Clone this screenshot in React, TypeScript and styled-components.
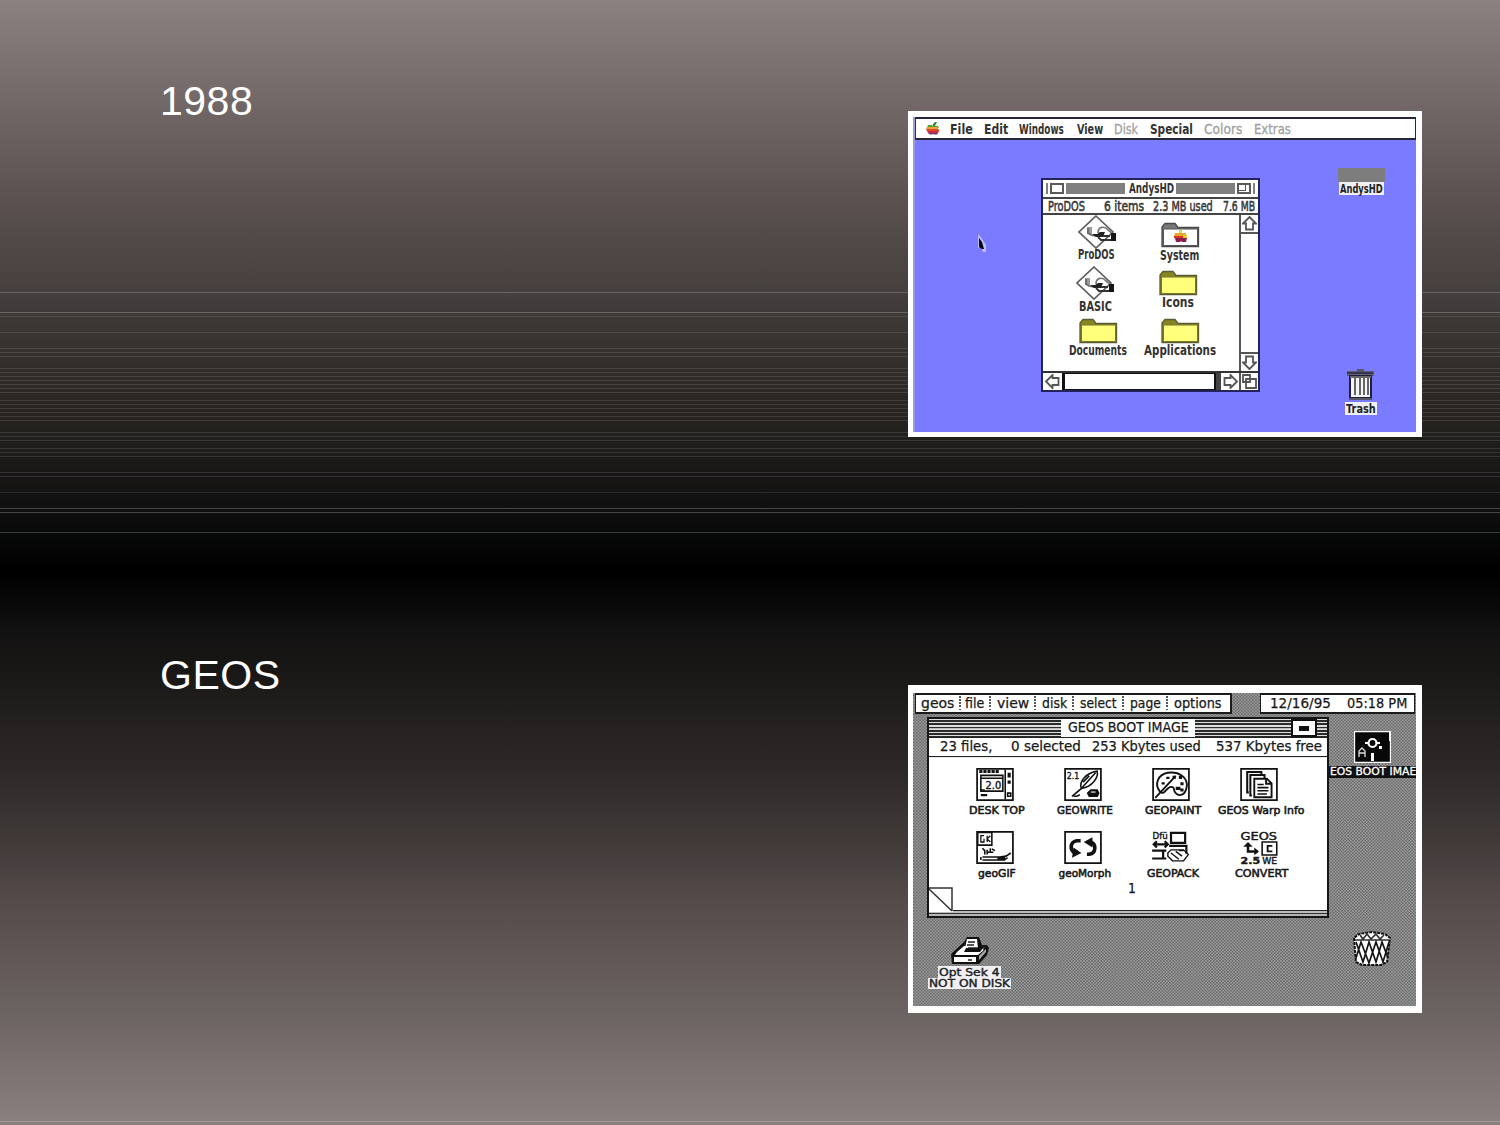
import React, { useLayoutEffect, useRef, useState } from "react";
import styled, { createGlobalStyle, css } from "styled-components";

const Global = createGlobalStyle`
  html, body { margin: 0; padding: 0; background: #000; }
  * { box-sizing: border-box; }
`;

const rules: Array<[number, string]> = [
  [292, "#6a6664"], [312, "#6a6664"], [316, "#4d4a48"], [332, "#4d4a48"],
  ...[348, 352, 356].map((y): [number, string] => [y, "#4b4745"]),
  ...[368, 372, 376, 380, 384, 388, 392].map((y): [number, string] => [y, "#474341"]),
  ...[400, 404, 408, 412, 416, 420].map((y): [number, string] => [y, "#403c3a"]),
  ...[432, 436, 440].map((y): [number, string] => [y, "#3b3937"]),
  ...[448, 452, 456].map((y): [number, string] => [y, "#363634"]),
  [472, "#343234"], [476, "#343234"], [492, "#2d2b2c"],
  [508, "#474546"], [512, "#474747"], [532, "#3c3e3d"], [1121, "#a39b9b"],
];

const ruleLayers = rules
  .map(([y, c]) => `linear-gradient(${c}, ${c}) 0 ${y}px / 100% 1px no-repeat`)
  .join(", ");

const Page = styled.main`
  width: 1500px;
  height: 1125px;
  overflow: hidden;
  background: ${ruleLayers},
    linear-gradient(#8c8181 0, #716767 105px, #5a5150 200px, #474140 285px, #3b3836 320px,
      #2a2624 400px, #1b1a17 460px, #111011 505px, #070908 535px, #000 565px, #000 575px,
      #121111 630px, #1d1b19 690px, #2d2928 770px, #433c3b 850px, #544a4a 900px, #6b6361 1010px, #8b8080 1125px);
`;

const Slide = styled.section`
  display: flex;
  justify-content: space-between;
  align-items: flex-start;
  height: 574px;
  padding: 76px 78px 0 160px;
`;

const Year = styled.h1`
  margin: 0;
  font: 400 41px/50px "Liberation Sans", Arial, sans-serif;
  letter-spacing: 0.5px;
  color: #fff;
`;

const Photo = styled.figure<{ $h: number; $top: number }>`
  width: 514px;
  height: ${(p) => p.$h}px;
  margin: 35px 0 0;
  padding: ${(p) => p.$top}px 6px 0 5px;
  background: #fff;
`;

const mac = css`
  font-family: "DejaVu Sans", sans-serif;
  font-weight: 700;
  font-size: 14.5px;
`;
const geos = css`
  font-family: "DejaVu Sans", sans-serif;
  font-weight: 400;
  font-size: 14px;
  -webkit-text-stroke: 0.25px;
`;

const MacDesk = styled.div`
  position: relative;
  width: 503px;
  height: 315px;
  overflow: hidden;
  background: #7b7bff;
  border-left: 2px solid #9c9cdc;
  color: #333;
  ${mac}
`;

const GeosDesk = styled.div`
  position: relative;
  width: 503px;
  height: 313px;
  overflow: hidden;
  background: repeating-conic-gradient(#6a6a6a 0 25%, #9c9c9c 0 50%) 0 0 / 3.14px 3.14px;
  color: #181818;
  ${geos}
`;

const FitBox = styled.span<{ $w: number; $h: number; $ml: number; $size?: number; $dim?: boolean; $weight?: number; $stroke?: number }>`
  display: block;
  flex: none;
  width: ${(p) => p.$w}px;
  height: ${(p) => p.$h}px;
  line-height: ${(p) => p.$h}px;
  margin-left: ${(p) => p.$ml}px;
  ${(p) => p.$size && `font-size: ${p.$size}px;`}
  ${(p) => p.$weight && `font-weight: ${p.$weight};`}
  ${(p) => p.$dim && "color: #a0a0a0; font-weight: 400; -webkit-text-stroke: 0.3px;"}
  ${(p) => p.$stroke && `-webkit-text-stroke: ${p.$stroke}px;`}
`;

const FitInner = styled.span`
  display: inline-block;
  white-space: pre;
  transform-origin: 0 50%;
`;

type FitProps = { w: number; h?: number; ml?: number; size?: number; dim?: boolean; weight?: number; stroke?: number; children: string };

/* Condenses a run of text to the width of its bitmap-font original. */
function Fit({ w, h = 16, ml = 0, size, dim, weight, stroke, children }: FitProps) {
  const ref = useRef<HTMLSpanElement>(null);
  const [scale, setScale] = useState(1);
  useLayoutEffect(() => {
    if (ref.current) setScale(w / ref.current.offsetWidth);
  }, [w, children]);
  return (
    <FitBox $w={w} $h={h} $ml={ml} $size={size} $dim={dim} $weight={weight} $stroke={stroke}>
      <FitInner ref={ref} style={{ transform: `scaleX(${scale})` }}>{children}</FitInner>
    </FitBox>
  );
}

const Placed = styled.div<{ $x: number; $y: number; $w: number; $gap?: number }>`
  position: absolute;
  left: ${(p) => p.$x}px;
  top: ${(p) => p.$y}px;
  width: ${(p) => p.$w}px;
  display: flex;
  flex-direction: column;
  align-items: center;
  gap: ${(p) => p.$gap ?? 0}px;
  svg { display: block; flex: none; }
`;

/* ---------- Apple IIGS desktop ---------- */

const MacMenu = styled.div`
  display: flex;
  align-items: center;
  height: 23px;
  border: solid #27273c;
  border-width: 2px 1px 2px 0;
  background: #fff;
  padding-left: 11px;
  box-shadow: inset 1px 0 #333;
`;

const MacWindow = styled.div`
  position: absolute;
  left: 126px;
  top: 61px;
  width: 219px;
  height: 214px;
  border: 2px solid #23235e;
  background: #fff;
`;

const MacTitle = styled.div`
  display: flex;
  align-items: center;
  height: 19px;
  padding: 0 3px 1px;
  border-bottom: 2px solid #444;
  gap: 2px;
`;

const GrayBar = styled.i<{ $w: number }>`
  flex: none;
  width: ${(p) => p.$w}px;
  height: 11px;
  background: #808080;
`;

const WinBox = styled.i<{ $zoom?: boolean }>`
  position: relative;
  flex: none;
  width: 14px;
  height: 11px;
  border: 2px solid #5a5a5a;
  ${(p) => p.$zoom && css`
    &::after {
      content: "";
      position: absolute;
      left: 0; top: 0;
      width: 6px; height: 5px;
      border: solid #5a5a5a;
      border-width: 0 1.5px 1.5px 0;
    }
  `}
`;

const MacInfo = styled.div`
  display: flex;
  align-items: center;
  height: 16px;
  padding-left: 5px;
  border-bottom: 2px solid #444;
  color: #383838;
`;

const MacBody = styled.div`
  display: flex;
  height: 156px;
`;

const MacCanvas = styled.div`
  position: relative;
  width: 196px;
`;

const VScroll = styled.div`
  display: flex;
  flex-direction: column;
  justify-content: space-between;
  width: 19px;
  border-left: 2px solid #555;
`;

const ScrollCell = styled.div<{ $edge: string }>`
  display: grid;
  place-items: center;
  height: 19px;
  border-${(p) => p.$edge}: 2px solid #555;
`;

const HScroll = styled.div`
  display: flex;
  height: 19px;
  border-top: 2px solid #333;
`;

const HCell = styled.div<{ $w: number; $left?: boolean }>`
  display: grid;
  place-items: center;
  width: ${(p) => p.$w}px;
  border-left: ${(p) => (p.$left ? "2px solid #555" : "0")};
`;

const Thumb = styled.div`
  width: 154px;
  border: solid #111;
  border-width: 1px 2px 1px 3px;
`;

const ThumbEdge = styled.div`
  width: 5px;
  background: #444;
`;

const Tag = styled.div<{ $dark?: boolean }>`
  padding: 0 1px;
  background: ${(p) => (p.$dark ? "#111" : "#f0f0f4")};
  color: ${(p) => (p.$dark ? "#fff" : "#222")};
`;

function Apple({ w = 14, h = 13 }: { w?: number; h?: number }) {
  return (
    <svg width={w} height={h} viewBox="0 0 14 13">
      <path d="M7 4 7 2 9 0 11 0 9 4Z" fill="#2f8c35" />
      <path d="M2 3h4l1 1h3l2 0 1 2H1Z" fill="#5aa02e" />
      <path d="M1 5h11v2H0Z" fill="#eda03a" />
      <path d="M0 7h12l2 2H1Z" fill="#dd4a28" />
      <path d="M1 9h12l-1 2H2Z" fill="#cc2f45" />
      <path d="M2 11h10l-1 1.5H8L7 12 6 12.5H4Z" fill="#70386b" />
    </svg>
  );
}

function Arrow({ turn }: { turn: number }) {
  return (
    <svg width="15" height="15" viewBox="0 0 15 15">
      <path transform={`rotate(${turn} 7.5 7.5)`} d="M7.5 1 14 7.5h-3V13.5H4V7.5H1Z" fill="#fff" stroke="#555" strokeWidth="1.8" />
    </svg>
  );
}

function Folder({ apple }: { apple?: boolean }) {
  return (
    <svg width="39" height="26" viewBox="0 0 39 26">
      <path d="M1 24.5V5l3-3.5h10l3 4h20.5v19Z" fill={apple ? "#777" : "#858524"} stroke={apple ? "#4a4a4a" : "#5c5c30"} strokeWidth="1.3" />
      <path d="M2.5 7h34v16.5h-34Z" fill={apple ? "#fff" : "#ffff7b"} stroke={apple ? "#555" : "#77772e"} strokeWidth="1" />
      {apple && (
        <g>
          <path d="M18 8h3v3h-3Z" fill="#d6dc50" />
          <path d="M14 11h11v3H13Z" fill="#e7a72c" />
          <path d="M13 14h9v2h-9Z" fill="#dc3422" />
          <path d="M22 13h4v3h-4Z" fill="#e5d22f" />
          <path d="M14 16h12l-1 4h-4l-1-1-1 1h-4Z" fill="#8a1d4d" />
        </g>
      )}
    </svg>
  );
}

function Diamond() {
  return (
    <svg width="40" height="34" viewBox="0 0 40 34">
      <path d="M18 1 35 17 18 33 1 17Z" fill="#fff" stroke="#5c5c5c" strokeWidth="1.7" />
      <path d="M9 12h5v7H9Z" fill="#999" />
      <path d="M10 13v5l3 2 5 1" fill="none" stroke="#666" strokeWidth="1.7" />
      <path d="M14 19h5l3-2h5l-2 5h-7Z" fill="#222" />
      <path d="M20 18c0-7 7-7 10-3l5 4" fill="none" stroke="#777" strokeWidth="1.7" />
      <path d="M20 22l3 3h12M25 21h7" fill="none" stroke="#333" strokeWidth="1.8" />
      <path d="M33 18h5v8h-5Z" fill="#151515" />
    </svg>
  );
}

function TrashCan() {
  return (
    <svg width="29" height="33" viewBox="0 0 29 33">
      <path d="M1 3h27v5H1Z" fill="#606074" />
      <path d="M11 1h7v3h-7Z" fill="#55556c" />
      <path d="M1 5h26" stroke="#24243c" strokeWidth="1.4" />
      <path d="M4 8h21v22H4Z" fill="#f5f5f5" stroke="#20203e" strokeWidth="2" />
      <path d="M3 31h23" stroke="#555568" strokeWidth="2" />
      <path d="M9 10v17M14 10v17M18 10v17M22 10v17" stroke="#555" strokeWidth="1.8" />
      <path d="M4 9h21" stroke="#686868" strokeWidth="2" />
    </svg>
  );
}

const Volume = styled.div`
  width: 47px;
  height: 14px;
  background: #7d7d7d;
`;

function AppleDesktop() {
  return (
    <MacDesk>
      <MacMenu>
        <Apple />
        <Fit w={23} ml={10}>File</Fit>
        <Fit w={24} ml={11}>Edit</Fit>
        <Fit w={45} ml={11}>Windows</Fit>
        <Fit w={26} ml={13}>View</Fit>
        <Fit w={24} ml={11} dim>Disk</Fit>
        <Fit w={43} ml={12}>Special</Fit>
        <Fit w={38} ml={11} dim>Colors</Fit>
        <Fit w={37} ml={12} dim>Extras</Fit>
      </MacMenu>

      <Placed $x={62} $y={117} $w={10}>
        <svg width="10" height="19" viewBox="0 0 10 19">
          <path d="M1 0v14l3-1 2 5h3v-7L3 2Z" fill="#bcbcf8" />
          <path d="M2 4 5 8 7 15 5 15 2 13Z" fill="#090915" />
        </svg>
      </Placed>

      <MacWindow>
        <MacTitle>
          <GrayBar $w={2} />
          <WinBox />
          <GrayBar $w={59} />
          <Fit w={45} ml={2}>AndysHD</Fit>
          <GrayBar $w={59} />
          <WinBox $zoom />
          <GrayBar $w={2} />
        </MacTitle>
        <MacInfo>
          <Fit w={37} weight={400} stroke={0.6}>ProDOS</Fit>
          <Fit w={40} ml={19} weight={400} stroke={0.6}>6 items</Fit>
          <Fit w={60} ml={9} weight={400} stroke={0.6}>2.3 MB used</Fit>
          <Fit w={32} ml={10} weight={400} stroke={0.6}>7.6 MB</Fit>
        </MacInfo>
        <MacBody>
          <MacCanvas>
            <Placed $x={35} $y={0} $w={40}><Diamond /></Placed>
            <Placed $x={34} $y={31} $w={38}><Fit w={37}>ProDOS</Fit></Placed>
            <Placed $x={117} $y={7} $w={40}><Folder apple /></Placed>
            <Placed $x={117} $y={32} $w={39}><Fit w={39}>System</Fit></Placed>
            <Placed $x={33} $y={51} $w={40}><Diamond /></Placed>
            <Placed $x={36} $y={83} $w={33}><Fit w={33}>BASIC</Fit></Placed>
            <Placed $x={115} $y={55} $w={40}><Folder /></Placed>
            <Placed $x={119} $y={79} $w={32}><Fit w={32}>Icons</Fit></Placed>
            <Placed $x={35} $y={103} $w={40}><Folder /></Placed>
            <Placed $x={26} $y={127} $w={58}><Fit w={58}>Documents</Fit></Placed>
            <Placed $x={117} $y={103} $w={40}><Folder /></Placed>
            <Placed $x={101} $y={127} $w={72}><Fit w={72}>Applications</Fit></Placed>
          </MacCanvas>
          <VScroll>
            <ScrollCell $edge="bottom"><Arrow turn={0} /></ScrollCell>
            <ScrollCell $edge="top"><Arrow turn={180} /></ScrollCell>
          </VScroll>
        </MacBody>
        <HScroll>
          <HCell $w={19}><Arrow turn={-90} /></HCell>
          <Thumb />
          <ThumbEdge />
          <HCell $w={18}><Arrow turn={90} /></HCell>
          <HCell $w={19} $left>
            <svg width="15" height="15" viewBox="0 0 15 15">
              <path d="M4 5h10v9H4Z M1 1h7v7H1Z" fill="#fff" stroke="#555" strokeWidth="1.8" />
            </svg>
          </HCell>
        </HScroll>
      </MacWindow>

      <Placed $x={422} $y={51} $w={49}>
        <Volume />
        <Tag><Fit w={43} h={13} size={13}>AndysHD</Fit></Tag>
      </Placed>
      <Placed $x={429} $y={251} $w={33} $gap={1}>
        <TrashCan />
        <Tag><Fit w={30} h={13} size={13}>Trash</Fit></Tag>
      </Placed>
    </MacDesk>
  );
}

/* ---------- GEOS desktop ---------- */

const TopBar = styled.div`
  display: flex;
  justify-content: space-between;
  padding: 0 1px 0 2px;
  height: 21px;
`;

const GeosMenu = styled.div<{ $w: number; $b: number; $l: number }>`
  display: flex;
  align-items: center;
  width: ${(p) => p.$w}px;
  padding: 0 0 1px ${(p) => p.$l}px;
  border: solid #1b1b1b;
  border-width: 2px ${(p) => p.$b}px 2px 1px;
  background: #fff;
`;

const Dots = styled.i`
  width: 2px;
  height: 15px;
  margin: 0 0 0 5px;
  background: repeating-linear-gradient(#555 0 1.6px, #fff 1.6px 3.14px);
`;

const GeosWindow = styled.div`
  position: absolute;
  left: 14px;
  top: 24px;
  width: 402px;
  height: 201px;
  background: #fff;
  border: 2px solid #161616;
`;

const GeosTitle = styled.div`
  display: flex;
  justify-content: space-between;
  height: 19px;
  border-bottom: 1px solid #222;
`;

const Stripes = styled.div`
  display: flex;
  justify-content: flex-end;
  width: 132px;
  padding-right: 10px;
  background: repeating-linear-gradient(#ddd 0 1.2px, #2b2b2b 1.2px 3.1px, #bbb 3.1px 3.2px);
`;

const CloseBox = styled.div`
  display: grid;
  place-items: center;
  width: 26px;
  height: 18px;
  border: 2px solid #111;
  background: #fff;
  &::after { content: ""; width: 10px; height: 5px; background: #111; }
`;

const GeosInfo = styled.div`
  display: flex;
  align-items: center;
  height: 19px;
  padding: 0 0 2px 11px;
  border-bottom: 1px solid #222;
  box-shadow: 0 1px #e8ece4;
`;

const IconGrid = styled.div`
  display: grid;
  grid-template-columns: repeat(4, 88px);
  grid-auto-rows: 63px;
  padding: 11px 0 0 22px;
`;

const FileIcon = styled.div`
  display: flex;
  flex-direction: column;
  align-items: center;
  gap: 2px;
  svg { display: block; overflow: visible; }
`;

const PageNo = styled.div`
  position: absolute;
  left: 199px;
  top: 161px;
`;

const Footer = styled.div`
  position: absolute;
  left: 0;
  right: 0;
  bottom: 0;
  height: 6px;
  border-top: 1px solid #222;
  background: linear-gradient(#bbb 0 2px, #333 2px 3px, #b5b5b5 3px);
`;

const Corner = styled.svg`
  position: absolute;
  left: 0;
  bottom: 4px;
`;

const Glyph = ({ children, frame = true }: { children: React.ReactNode; frame?: boolean }) => (
  <svg width="38" height="33" viewBox="0 0 24 21">
    {frame && <path d="M.6.6h22.8v19.8H.6Z" fill="#fff" stroke="#111" strokeWidth="1.1" />}
    {children}
  </svg>
);

const Ink = styled.g`
  fill: none;
  stroke: #111;
  stroke-width: 1;
`;

const GlyphText = styled.text<{ $s: number; $b?: boolean }>`
  font-family: "DejaVu Sans", sans-serif;
  font-size: ${(p) => p.$s}px;
  font-weight: ${(p) => (p.$b ? 700 : 400)};
  fill: #161616;
  stroke: #161616;
  stroke-width: 0.25px;
`;

const icons: Array<{ name: string; w: number; art: React.ReactNode }> = [
  {
    name: "DESK TOP", w: 56,
    art: (
      <Glyph><Ink>
        <path d="M2 2.2h13" strokeWidth="2" strokeDasharray="2 .6" />
        <path d="M3 4.7h14v10H3ZM3 6.5h14M18.5 1v19" />
        <path d="M20 3h2v3h-2ZM20 8h2v2h-2ZM3 16.5h4v1.5H3Z" fill="#111" stroke="none" />
        <path d="M20 16h2v2h-2ZM2.5 14h3" />
        <GlyphText x="6" y="13.2" $s={6.3} textLength="10" lengthAdjust="spacingAndGlyphs">2.0</GlyphText>
      </Ink></Glyph>
    ),
  },
  {
    name: "GEOWRITE", w: 56,
    art: (
      <Glyph><Ink>
        <GlyphText x="1.7" y="6.8" $s={6} textLength="8" lengthAdjust="spacingAndGlyphs">2.1</GlyphText>
        <path d="M5 18 11 13C9 9 14 3 21 2c1 4-3 10-10 11M10 14 20 3M12 9l4-4" />
        <path d="M6 18h2l2-1" />
        <path d="M15 16l2-2h4l1 2-1 2h-5Z" fill="#111" />
        <path d="M17 15.3h3" stroke="#fff" strokeWidth=".7" />
      </Ink></Glyph>
    ),
  },
  {
    name: "GEOPAINT", w: 56,
    art: (
      <Glyph><Ink>
        <path d="M5 15C1 10 4 4 10 3c7-1 13 3 12 9-1 6-5 6-7 4s0-4-3-4-4 6-7 3Z" strokeWidth="1.2" />
        <path d="M2 19 15 5" strokeWidth="1.2" />
        <path d="M13 5h2v2h-2ZM17 5h2v2h-2ZM18 9h2v2h-2ZM15 12h3v2h-3ZM6 9h2v1.5H6ZM9 5.5h2V7H9ZM18 13h2v2h-2Z" fill="#111" stroke="none" />
      </Ink></Glyph>
    ),
  },
  {
    name: "GEOS Warp Info", w: 86,
    art: (
      <Glyph><Ink>
        <path d="M5.5 15.5h-1v-13h9v2M7.5 17.5h-1v-13h9v2" strokeWidth="1.3" />
        <path d="M9 6.8h8l3 3v8.8H9ZM16.5 7v3H20" fill="#fff" strokeWidth="1.2" />
        <path d="M11 10.5h4M11 12.5h7M11 14.5h7M11 16.5h6" />
      </Ink></Glyph>
    ),
  },
  {
    name: "geoGIF", w: 38,
    art: (
      <Glyph><Ink>
        <path d="M1 1h9v8H1Z" />
        <path d="M5 3H3v4h2V5M7 3v4M7 5l2-2M7 5l2 2" strokeWidth=".8" />
        <path d="M4 11l1.5 1.5V15M7 12v3M9 11v3M7 13.5h4M10 11.5l2 1" />
        <path d="M4 16.5h11l4-.5 3-2M4 18.5h14l2-1.5" />
        <path d="M3 16.5v2" /><path d="M14 17h4v1h-4Z" fill="#111" />
      </Ink></Glyph>
    ),
  },
  {
    name: "geoMorph", w: 53,
    art: (
      <Glyph><Ink>
        <path d="M10.5 6.2H8C3.5 7 3.5 12.5 7 14" strokeWidth="2.3" />
        <path d="M14.5 14.8H16C20.5 14 20.5 8.5 17 7" strokeWidth="2.3" />
        <path d="M6 10.5 11 14 5 17ZM18 10.5 12.5 7 18 4Z" fill="#111" stroke="none" />
      </Ink></Glyph>
    ),
  },
  {
    name: "GEOPACK", w: 52,
    art: (
      <Glyph frame={false}><Ink>
        <GlyphText x="0.3" y="5.2" $s={5.8} textLength="9.7" lengthAdjust="spacingAndGlyphs">Dfü</GlyphText>
        <path d="M12 1.2h9v6.3h-9ZM10.8 9.5h11v5M1 8.5h9M3 6.5 1 8.5 3 10.5M8 6.5 10 8.5 8 10.5M0 12.5h9M0 17.5h9M7 12.5v5" strokeWidth="1.4" />
        <path d="M10 14l2-2h8l3 3-3 4h-7l-3-3ZM12 14l5 4M15 13l4 3M17 12.5h3" strokeWidth=".9" />
      </Ink></Glyph>
    ),
  },
  {
    name: "CONVERT", w: 53,
    art: (
      <Glyph frame={false}><Ink>
        <GlyphText x="0.3" y="5.4" $s={6.2} textLength="23.2" lengthAdjust="spacingAndGlyphs">GEOS</GlyphText>
        <path d="M14 7h9.3v8.3H14Z" />
        <path d="M20.5 9.5h-3v3.5h3" strokeWidth="1.2" />
        <path d="M5 9v4h6" strokeWidth="1.6" />
        <path d="M2 10 5 7l3 3ZM9 10.5l3 2.5-3 2.5Z" fill="#111" stroke="none" />
        <GlyphText x="0.3" y="20.8" $s={5.6} $b textLength="12.5" lengthAdjust="spacingAndGlyphs">2.5</GlyphText>
        <GlyphText x="14" y="20.8" $s={5.6} textLength="9.5" lengthAdjust="spacingAndGlyphs">WE</GlyphText>
      </Ink></Glyph>
    ),
  },
];

const menu: Array<[string, number, number]> = [
  ["geos", 33, 5], ["file", 19, 4], ["view", 32, 6], ["disk", 25, 6], ["select", 37, 6], ["page", 31, 6], ["options", 48, 6],
];

function GeosDesktop() {
  return (
    <GeosDesk>
      <TopBar>
        <GeosMenu $w={317} $b={2} $l={0}>
          {menu.map(([label, w, ml], i) => (
            <React.Fragment key={label}>
              {i > 0 && <Dots />}
              <Fit w={w} ml={ml}>{label}</Fit>
            </React.Fragment>
          ))}
        </GeosMenu>
        <GeosMenu $w={155} $b={1} $l={9}>
          <Fit w={61}>12/16/95</Fit>
          <Fit w={60} ml={16}>05:18 PM</Fit>
        </GeosMenu>
      </TopBar>

      <GeosWindow>
        <GeosTitle>
          <Stripes />
          <Fit w={121} h={16}>GEOS BOOT IMAGE</Fit>
          <Stripes><CloseBox /></Stripes>
        </GeosTitle>
        <GeosInfo>
          <Fit w={52} size={13.5}>23 files,</Fit>
          <Fit w={70} ml={19} size={13.5}>0 selected</Fit>
          <Fit w={109} ml={11} size={13.5}>253 Kbytes used</Fit>
          <Fit w={106} ml={15} size={13.5}>537 Kbytes free</Fit>
        </GeosInfo>
        <IconGrid>
          {icons.map(({ name, w, art }) => (
            <FileIcon key={name}>
              {art}
              <Fit w={w} h={14} ml={4} size={10.5} weight={400} stroke={0.55}>{name}</Fit>
            </FileIcon>
          ))}
        </IconGrid>
        <PageNo><Fit w={8}>1</Fit></PageNo>
        <Footer />
        <Corner width="24" height="25" viewBox="0 0 24 25">
          <path d="M0 0h24v25H0Z" fill="#fff" />
          <path d="M0 1h23v23M0 2 23 24" fill="none" stroke="#333" strokeWidth="1.5" />
        </Corner>
      </GeosWindow>

      <Placed $x={416} $y={38} $w={87} $gap={3}>
        <svg width="37" height="32" viewBox="0 0 37 32">
          <path d="M.5.5h36v31H.5Z" fill="#080808" stroke="#fff" strokeWidth="1.3" />
          <path d="M35 1h2v9h-2Z" fill="#fff" />
          <circle cx="18.5" cy="12" r="4" fill="none" stroke="#fff" strokeWidth="2.2" />
          <path d="M11 11h3v2h-3ZM23 11h3v2h-3ZM25 15h3v3h-3ZM17 22h3v8h-3Z" fill="#fff" />
          <path d="M5 26v-6l3-3 3 3v6M5 22h6" fill="none" stroke="#ddd" strokeWidth="1.3" />
        </svg>
        <Tag $dark><Fit w={86} h={12} size={10} stroke={0.3}>EOS BOOT IMAE</Fit></Tag>
      </Placed>

      <Placed $x={439} $y={238} $w={40}>
        <svg width="40" height="36" viewBox="0 0 40 36">
          <path d="M2 7 4 31 10 34h19l6-3L38 7 33 3 20 1 7 3Z" fill="#fff" stroke="#111" strokeWidth="2" strokeDasharray="3 1" />
          <path d="M3 9h34M8 4l3 4 4-5 4 5 5-5 4 5 4-4" fill="none" stroke="#333" strokeWidth="1.7" />
          <path d="M4 11 11 31 17 11 24 31 30 11 36 27M4 27 9 11 17 32 24 11 31 31 37 11" fill="none" stroke="#161616" strokeWidth="1.7" />
        </svg>
      </Placed>

      <Placed $x={15} $y={243} $w={83}>
        <svg width="40" height="30" viewBox="0 0 40 30">
          <path d="M1 18 14 6 17 1h12l3 8h5l2 3-2 7-8 9H2Z" fill="#111" />
          <path d="M4 21h22v5H4ZM7 16 14 10h3l-3 6h16l4-5v3l-6 5H5Z" fill="#fff" />
          <path d="M17 3h10l1 9H15Z" fill="#fff" />
          <path d="M18 6h7M17 9h7M18 12h10M18 24h4M34 9v9" stroke="#222" strokeWidth="1.5" />
          <path d="M29 20 36 13v3l-7 8Z" fill="#aaa" />
        </svg>
        <Tag><Fit w={61} h={12} size={10.5} stroke={0.4}>Opt Sek 4</Fit></Tag>
        <Tag><Fit w={81} h={11} size={10.5} stroke={0.4}>NOT ON DISK</Fit></Tag>
      </Placed>
    </GeosDesk>
  );
}

export default function App() {
  return (
    <>
      <Global />
      <Page>
        <Slide>
          <Year>1988</Year>
          <Photo $h={326} $top={6}><AppleDesktop /></Photo>
        </Slide>
        <Slide>
          <Year>GEOS</Year>
          <Photo $h={328} $top={8}><GeosDesktop /></Photo>
        </Slide>
      </Page>
    </>
  );
}
